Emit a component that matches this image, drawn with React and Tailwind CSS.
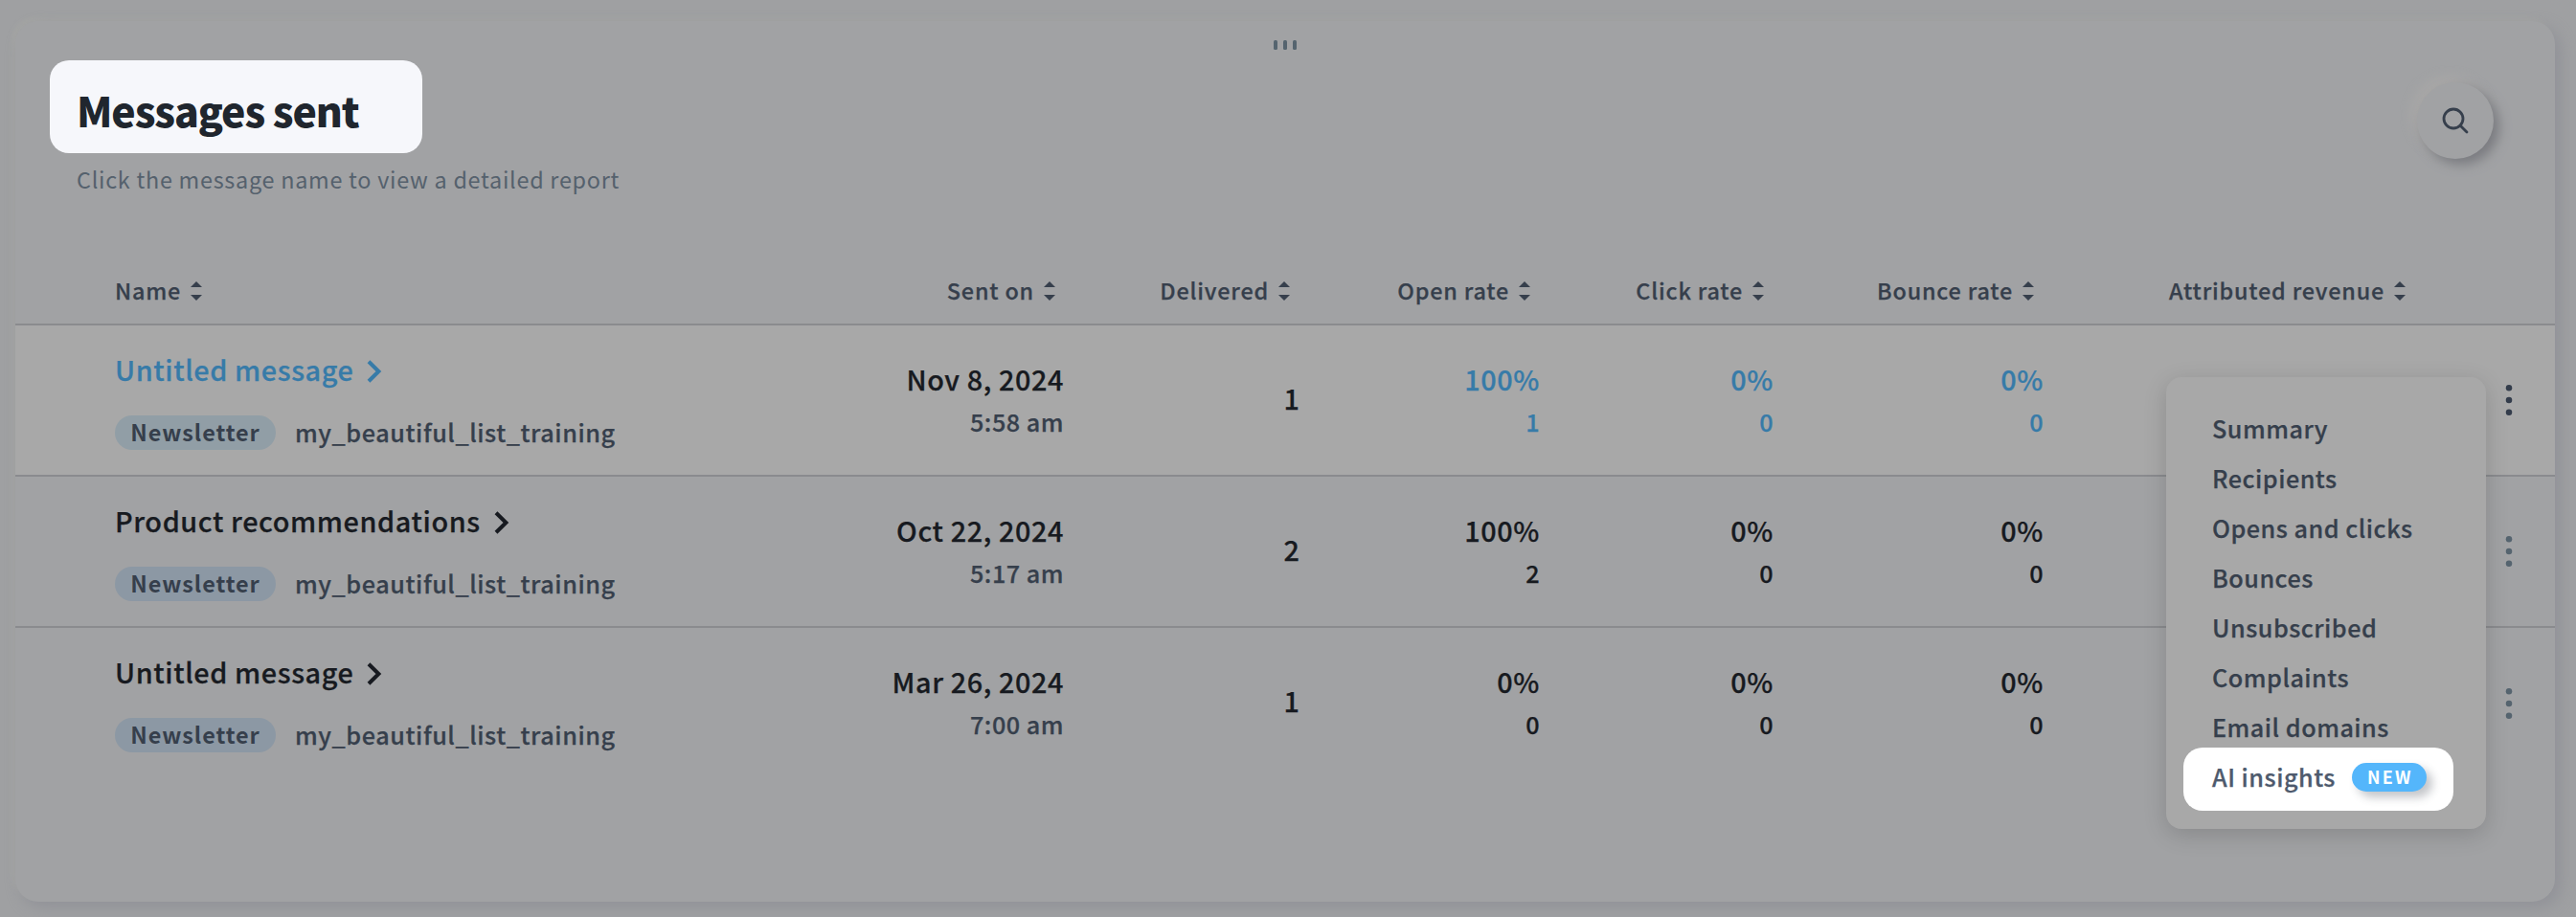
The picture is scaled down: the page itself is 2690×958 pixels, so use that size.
const COLS =
  "grid grid-cols-[784px_312px_245px_251px_244px_282px_388px_146px]";

const headers = [
  "Sent on",
  "Delivered",
  "Open rate",
  "Click rate",
  "Bounce rate",
  "Attributed revenue",
];

const rows = [
  {
    title: "Untitled message",
    date: "Nov 8, 2024",
    time: "5:58 am",
    delivered: "1",
    stats: [["100%", "1"], ["0%", "0"], ["0%", "0"]],
    active: true,
  },
  {
    title: "Product recommendations",
    date: "Oct 22, 2024",
    time: "5:17 am",
    delivered: "2",
    stats: [["100%", "2"], ["0%", "0"], ["0%", "0"]],
  },
  {
    title: "Untitled message",
    date: "Mar 26, 2024",
    time: "7:00 am",
    delivered: "1",
    stats: [["0%", "0"], ["0%", "0"], ["0%", "0"]],
    last: true,
  },
];

const menuItems = [
  "Summary",
  "Recipients",
  "Opens and clicks",
  "Bounces",
  "Unsubscribed",
  "Complaints",
  "Email domains",
];

function SortIcon() {
  return (
    <svg width="12" height="20" viewBox="0 0 12 20" fill="#363f4c" className="mt-0.5 shrink-0">
      <path d="M6 0L12 6H0Z" />
      <path d="M6 20L12 14H0Z" />
    </svg>
  );
}

function Chevron() {
  return (
    <svg width="16" height="24" viewBox="0 0 16 24" fill="none" stroke="currentColor" strokeWidth="4" className="mt-1 shrink-0">
      <path d="M2 1.8L12.4 12L2 22.2" />
    </svg>
  );
}

function Dots({ active }) {
  return (
    <svg width="8" height="34" viewBox="0 0 8 34" className={active ? "text-[#333c4b]" : "text-[#55646f]"} fill="currentColor">
      <circle cx="4" cy="4.2" r="3.25" />
      <circle cx="4" cy="17" r="3.25" />
      <circle cx="4" cy="29.8" r="3.25" />
    </svg>
  );
}

function Row({ row }) {
  const main = row.active ? "text-[#377ba8]" : "text-[#171a20]";
  return (
    <div
      className={
        COLS +
        " h-[158px] " +
        (row.active ? "bg-[#a8a8a8] " : "") +
        (row.last ? "" : "border-b-2 border-[#8a8b8e]")
      }
    >
      <div className="pl-[104px] pt-[26px]">
        <div className={"flex items-center gap-3.5 text-[28.8px] leading-10 tracking-[0.6px] " + main}>
          <span>{row.title}</span>
          <Chevron />
        </div>
        <div className="mt-7 flex h-9 items-start gap-5 text-[#363f4c]">
          <span
            className={
              "h-9 w-[168px] rounded-full text-center text-[23.4px] font-bold leading-[34px] tracking-[0.95px] [-webkit-text-stroke:0px] " +
              (row.active ? "bg-[#919ea6]" : "bg-[#8c98a4]")
            }
          >
            Newsletter
          </span>
          <span className="text-[25.2px] leading-[34px] tracking-[0.58px]">my_beautiful_list_training</span>
        </div>
      </div>
      <div className="flex flex-col items-end pr-px pt-[34px]">
        <span className="text-[28.8px] leading-[44px] tracking-[0.6px] text-[#171a20]">{row.date}</span>
        <span className="text-[25.2px] leading-[45px] tracking-[0.5px] text-[#363f4c]">{row.time}</span>
      </div>
      <div className="pt-[54px] text-right text-[28.8px] leading-[44px] text-[#171a20]">{row.delivered}</div>
      {row.stats.map(([pct, n], i) => (
        <div key={i} className={"flex flex-col items-end pt-[34px] " + main}>
          <span className="text-[28.8px] leading-[44px] tracking-[0.6px]">{pct}</span>
          <span className="text-[25.2px] leading-[45px] tracking-[0.5px]">{n}</span>
        </div>
      ))}
      <div />
      <div className="flex items-center pl-[94px]">
        <Dots active={row.active} />
      </div>
    </div>
  );
}

export default function App() {
  return (
    <div className="relative h-[958px] w-[2690px] overflow-hidden bg-[#9fa0a2] pl-4 pt-[22px] font-['Noto_Sans_CJK_SC',sans-serif] font-medium [-webkit-text-stroke:0.25px]">
      <div className="flex h-[920px] w-[2652px] flex-col rounded-3xl bg-[#a1a2a4] shadow-[6px_6px_16px_#919298,-4px_-4px_4px_#a4a5a4]">
        <header className="flex h-[246px]">
          <div className="w-[700px] pl-9 pt-[41px]">
            <h1 className="h-[97px] w-[389px] rounded-[20px] bg-[#f6f7fb] pl-7 pt-[21px] text-[42.7px] font-black leading-[60px] tracking-[-1.1px] text-[#20262e] [-webkit-text-stroke:0px]">
              Messages sent
            </h1>
            <p className="pl-7 pt-[7px] text-[23.4px] font-normal leading-10 tracking-[0.73px] text-[#55616d] [-webkit-text-stroke:0px]">
              Click the message name to view a detailed report
            </p>
          </div>
          <div className="ml-[614px] flex w-6 justify-between pt-5">
            <span className="h-2.5 w-1 rounded-[1.5px] bg-[#55646f]" />
            <span className="h-2.5 w-1 rounded-[1.5px] bg-[#55646f]" />
            <span className="h-2.5 w-1 rounded-[1.5px] bg-[#55646f]" />
          </div>
          <div className="ml-auto pr-16 pt-16">
            <button className="flex size-20 items-center justify-center rounded-full bg-[#a1a2a4] shadow-[6px_6px_12px_#7b7c81,-6px_-6px_12px_#a9a8a7]">
              <svg width="28" height="28" viewBox="0 0 28 28" fill="none" stroke="#363f4c" strokeWidth="2.8" strokeLinecap="round">
                <circle cx="12" cy="12" r="10" />
                <path d="M19.2 19.2L26 26" />
              </svg>
            </button>
          </div>
        </header>

        <div className={COLS + " h-[72px] border-b-2 border-[#8a8b8e] text-[23.4px] leading-[70px] tracking-[0.8px] text-[#363f4c]"}>
          <div className="flex items-center gap-2.5 pl-[104px]">
            <span>Name</span>
            <SortIcon />
          </div>
          {headers.map((h) => (
            <div key={h} className="flex items-center justify-end gap-2.5 pr-2.5">
              <span>{h}</span>
              <SortIcon />
            </div>
          ))}
        </div>

        {rows.map((row, i) => (
          <Row key={i} row={row} />
        ))}
      </div>

      <div className="absolute left-[2262px] top-[394px] flex h-[472px] w-[334px] flex-col rounded-2xl bg-[#a8a8a8] pl-[18px] pt-[27px] text-[25.2px] leading-[52px] tracking-[0.5px] text-[#363f4c] shadow-[0_6px_24px_rgba(0,0,0,0.16)]">
        {menuItems.map((m) => (
          <div key={m} className="h-[52px] pl-[30px]">{m}</div>
        ))}
        <div className="-mt-1 flex h-[66px] w-[282px] gap-[17px] rounded-[20px] bg-white pl-[30px] pt-1 text-[#4e5a6d]">
          <span>AI insights</span>
          <span className="mt-3 h-[30px] w-[78px] rounded-full bg-[#54b6fb] pl-0.5 text-center text-[18px] font-bold leading-[29px] tracking-[2.2px] text-white shadow-[6px_6px_10px_rgba(60,66,80,0.3)] [-webkit-text-stroke:0px]">
            NEW
          </span>
        </div>
      </div>
    </div>
  );
}
